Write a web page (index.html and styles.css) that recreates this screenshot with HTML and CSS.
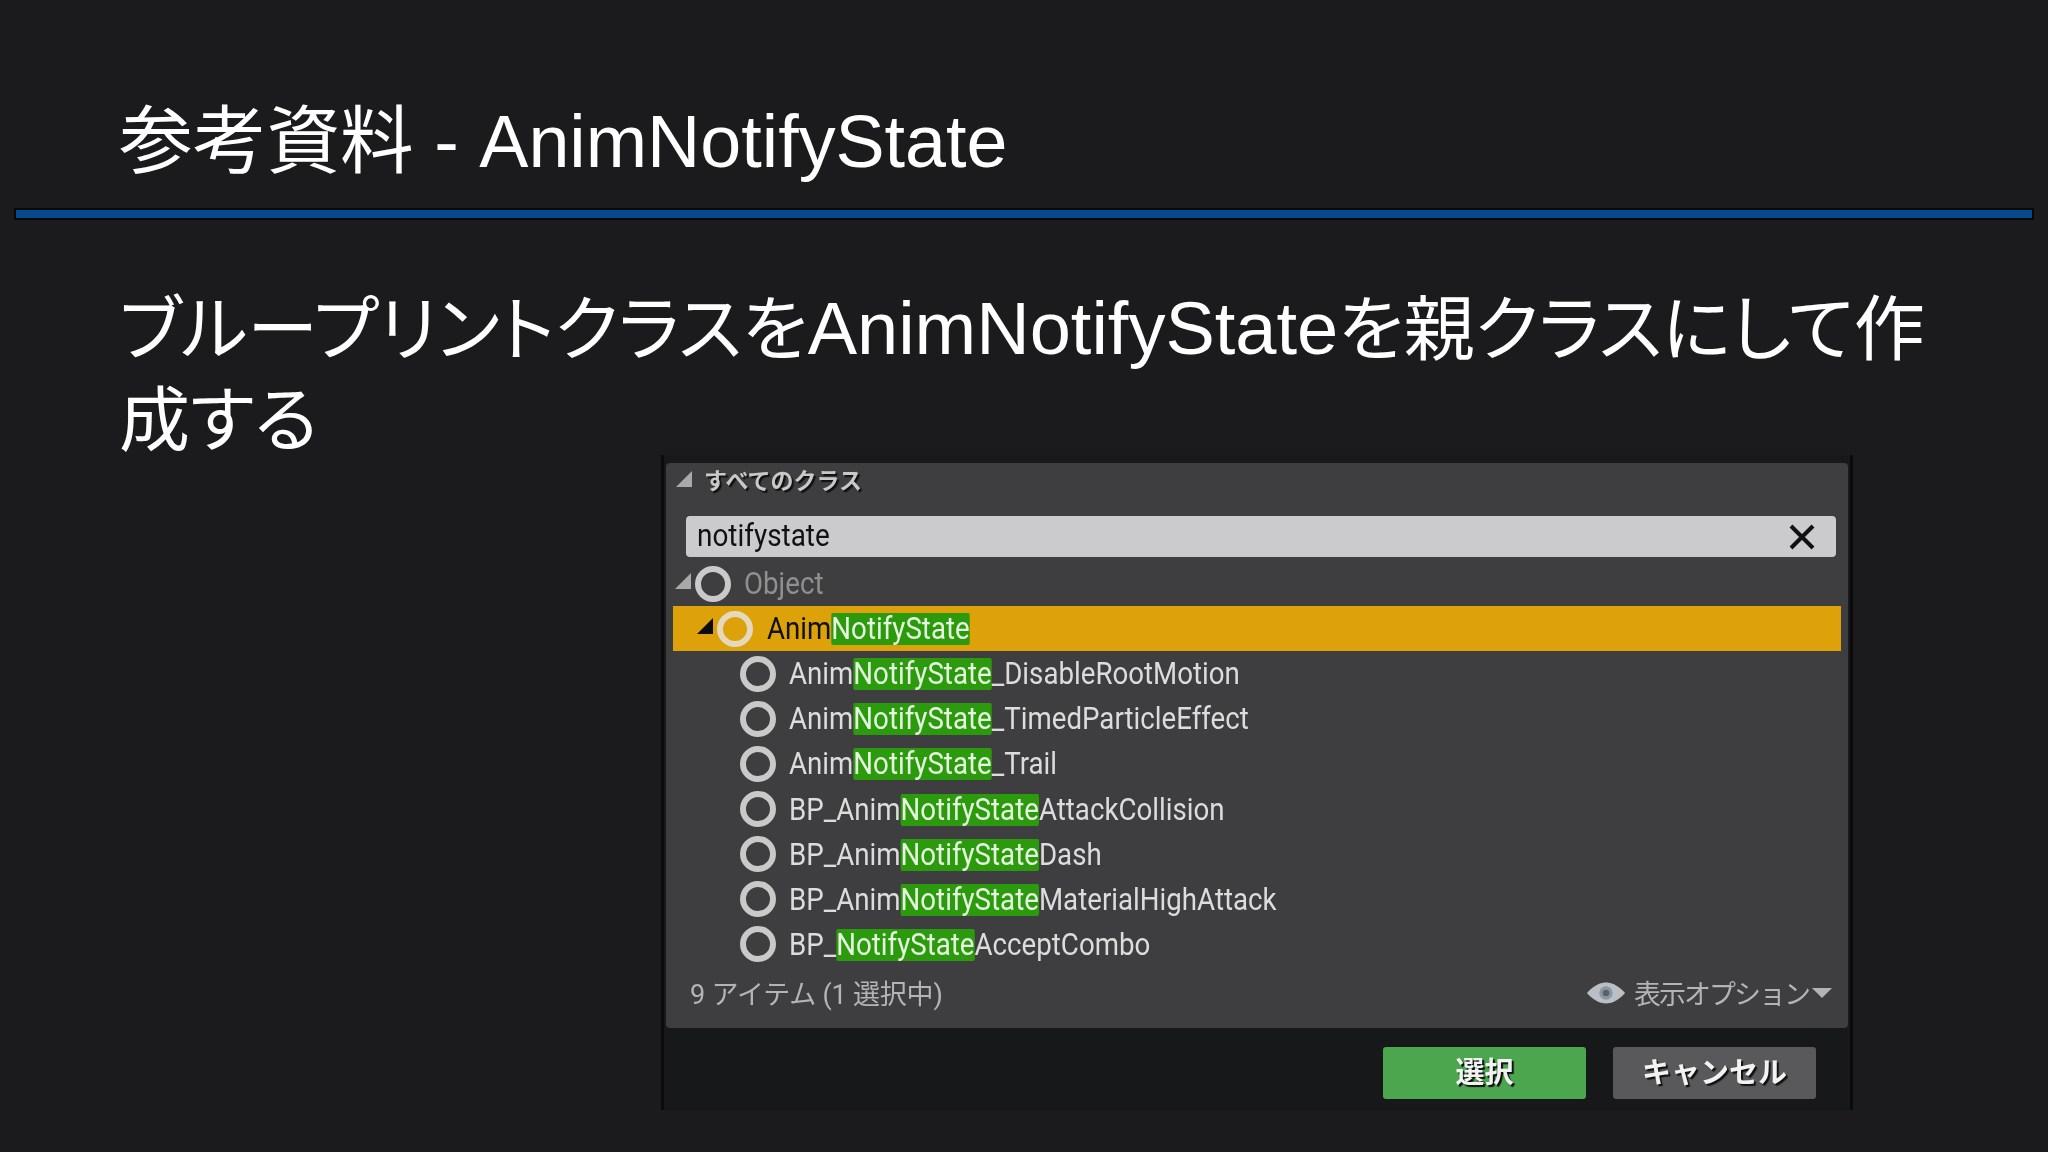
FILE: index.html
```html
<!DOCTYPE html>
<html lang="ja">

<head>
    <meta charset="UTF-8">
    <title>参考資料 - AnimNotifyState</title>
    <link rel="stylesheet" href="styles.css">
</head>

<body>
    <main class="slide">
        <h1 class="slide-title">参考資料 - AnimNotifyState</h1>
        <div class="title-rule"></div>
        <p class="slide-text">ブループリントクラスを<span class="latin">AnimNotifyState</span>を親クラスにして作<br>成する</p>

        <!-- Class picker screenshot -->
        <section class="picker">
            <div class="picker-panel">
                <div class="panel-head">
                    <svg class="arrow-grey" width="18" height="18" viewBox="0 0 18 18"><polygon points="17,1 17,17 1,17" /></svg>
                    <span>すべてのクラス</span>
                </div>
                <div class="search-box">
                    <span>notifystate</span>
                    <svg width="28" height="28" viewBox="0 0 28 28"><path d="M3 3 L25 25 M25 3 L3 25" /></svg>
                </div>

                <ul class="class-tree">
                    <li class="tree-row row-root">
                        <svg class="arrow-grey" width="18" height="18" viewBox="0 0 18 18"><polygon points="17,1 17,17 1,17" /></svg>
                        <i class="ring"></i>
                        <span class="row-name">Object</span>
                    </li>
                    <li class="tree-row row-selected">
                        <svg class="arrow-dark" width="18" height="18" viewBox="0 0 18 18"><polygon points="17,1 17,17 1,17" /></svg>
                        <i class="ring"></i>
                        <span class="row-name">Anim<mark>NotifyState</mark></span>
                    </li>
                    <li class="tree-row row-leaf"><i class="ring"></i><span class="row-name">Anim<mark>NotifyState</mark>_DisableRootMotion</span></li>
                    <li class="tree-row row-leaf"><i class="ring"></i><span class="row-name">Anim<mark>NotifyState</mark>_TimedParticleEffect</span></li>
                    <li class="tree-row row-leaf"><i class="ring"></i><span class="row-name">Anim<mark>NotifyState</mark>_Trail</span></li>
                    <li class="tree-row row-leaf"><i class="ring"></i><span class="row-name">BP_Anim<mark>NotifyState</mark>AttackCollision</span></li>
                    <li class="tree-row row-leaf"><i class="ring"></i><span class="row-name">BP_Anim<mark>NotifyState</mark>Dash</span></li>
                    <li class="tree-row row-leaf"><i class="ring"></i><span class="row-name">BP_Anim<mark>NotifyState</mark>MaterialHighAttack</span></li>
                    <li class="tree-row row-leaf"><i class="ring"></i><span class="row-name">BP_<mark>NotifyState</mark>AcceptCombo</span></li>
                </ul>

                <div class="panel-foot">
                    <span class="item-count">9 アイテム (1 選択中)</span>
                    <div class="view-options">
                        <svg width="40" height="24" viewBox="0 0 42 24">
                            <path class="eye-white" d="M1 12 C9 3 16 1 21 1 C26 1 33 3 41 12 C33 21 26 23 21 23 C16 23 9 21 1 12 Z" />
                            <circle class="eye-iris" cx="21" cy="12" r="7" />
                            <circle class="eye-pupil" cx="21" cy="12" r="3.5" />
                        </svg>
                        <span class="options-label">表示オプション</span>
                        <i class="caret"></i>
                    </div>
                </div>
            </div>

            <div class="picker-buttons">
                <button type="button" class="btn btn-select">選択</button>
                <button type="button" class="btn btn-cancel">キャンセル</button>
            </div>
        </section>
    </main>
</body>

</html>
```

FILE: styles.css
```css
/* Global styles */
* {
    padding: 0;
    margin: 0;
    box-sizing: border-box;
}

html,
body {
    width: 2048px;
    height: 1152px;
    overflow: hidden;
    background-color: #1b1b1d;
}

body {
    font-family: "Liberation Sans", "Noto Sans CJK JP", sans-serif;
    color: #fff;
}

/* Slide */
.slide {
    display: flex;
    flex-direction: column;
    height: 100%;
    padding-top: 99px;
}

.slide-title {
    font-size: 73.7px;
    font-weight: 400;
    line-height: 86px;
    padding-left: 119px;
}

.title-rule {
    height: 12px;
    margin: 23px 14px 0;
    background-color: #054a8f;
    border: 2px solid #050709;
}

.slide-text {
    width: 1830px;
    margin: 63px 0 0 119px;
    font-size: 71px;
    font-feature-settings: "palt";
    line-height: 91px;
}

.latin {
    font-size: 74px;
}

/* Class picker */
.picker {
    width: 1192px;
    height: 655px;
    margin: -11px 0 0 661px;
    padding: 8px 2px 0;
    background-color: #17181a;
    border-left: 3px solid #0b0b0d;
    border-right: 3px solid #0b0b0d;
    font-family: Roboto, "Noto Sans CJK JP", sans-serif;
    filter: blur(0.6px);
}

.picker-panel {
    display: flex;
    flex-direction: column;
    height: 565px;
    padding: 0 8px;
    background-color: #3e3e40;
    border-radius: 4px;
}

.panel-head {
    display: flex;
    align-items: center;
    gap: 11px;
    height: 32px;
    padding: 0 0 0 1px;
    font-size: 23px;
    font-weight: 700;
    color: #c8c8c8;
    text-shadow: 2px 2px 1px #111;
}

.arrow-grey polygon {
    fill: #a9a9a9;
}

.arrow-dark polygon {
    fill: #0c0c0c;
}

.search-box {
    display: flex;
    align-items: center;
    justify-content: space-between;
    height: 41px;
    margin: 21px 4px 0 12px;
    padding: 0 20px 0 11px;
    background-color: #cbcbcd;
    border-radius: 4px;
    font-size: 31px;
    color: #111;
}

.search-box span {
    margin-top: -2px;
    transform: scaleX(0.9);
    transform-origin: left center;
}

.search-box path {
    fill: none;
    stroke: #111;
    stroke-width: 4;
}

/* Tree */
.class-tree {
    list-style: none;
    margin-top: 4px;
}

.tree-row {
    display: flex;
    align-items: center;
    height: 45.1px;
}

.ring {
    flex: none;
    width: 36px;
    height: 36px;
    border: 6px solid #c9c9c9;
    border-radius: 50%;
}

.row-name {
    font-size: 31px;
    color: #dcdcdc;
    white-space: nowrap;
    transform: scaleX(0.893);
    transform-origin: left center;
}

.row-name mark {
    display: inline-block;
    line-height: 32px;
    background-color: #2b9a0c;
    border-radius: 2px;
    color: #e6f5e0;
}

.row-root .arrow-grey {
    margin-bottom: 6px;
}

.row-root .ring {
    margin: 0 13px 0 3px;
}

.row-root .row-name {
    color: #8f8f8f;
}

.row-selected {
    margin: 0 -1px;
    padding-left: 23px;
    background-color: #dda109;
}

.row-selected .ring {
    margin: 0 14px 0 3px;
    border-color: #e4d9bd;
}

.row-selected .arrow-dark {
    margin-bottom: 6px;
}

.row-selected .row-name {
    color: #111;
}

.row-leaf {
    padding-left: 66px;
}

.row-leaf .ring {
    margin-right: 13px;
}

/* Panel footer */
.panel-foot {
    display: flex;
    align-items: center;
    justify-content: space-between;
    margin-top: 6px;
    padding: 0 8px 0 16px;
    height: 40px;
    font-size: 27px;
    color: #b4b4b4;
}

.item-count {
    letter-spacing: -0.2px;
}

.view-options {
    display: flex;
    align-items: center;
    gap: 8px;
}

.options-label {
    margin-right: -5px;
    letter-spacing: -2px;
}

.eye-white {
    fill: #b9bfc4;
}

.eye-iris {
    fill: #8d97a1;
}

.eye-pupil {
    fill: #56616f;
}

.caret {
    width: 0;
    height: 0;
    border-left: 10px solid transparent;
    border-right: 10px solid transparent;
    border-top: 10px solid #b4b4b4;
}

/* Buttons */
.picker-buttons {
    display: flex;
    justify-content: flex-end;
    gap: 27px;
    margin-top: 19px;
    padding-right: 32px;
}

.btn {
    width: 203px;
    height: 52px;
    padding-bottom: 6px;
    border: none;
    border-radius: 3px;
    font-family: inherit;
    font-size: 29px;
    font-weight: 700;
    color: #f2f2f2;
    text-shadow: 2px 2px 1px #111;
}

.btn-select {
    background-color: #4ba64e;
}

.btn-cancel {
    background-color: #59595b;
}
```
